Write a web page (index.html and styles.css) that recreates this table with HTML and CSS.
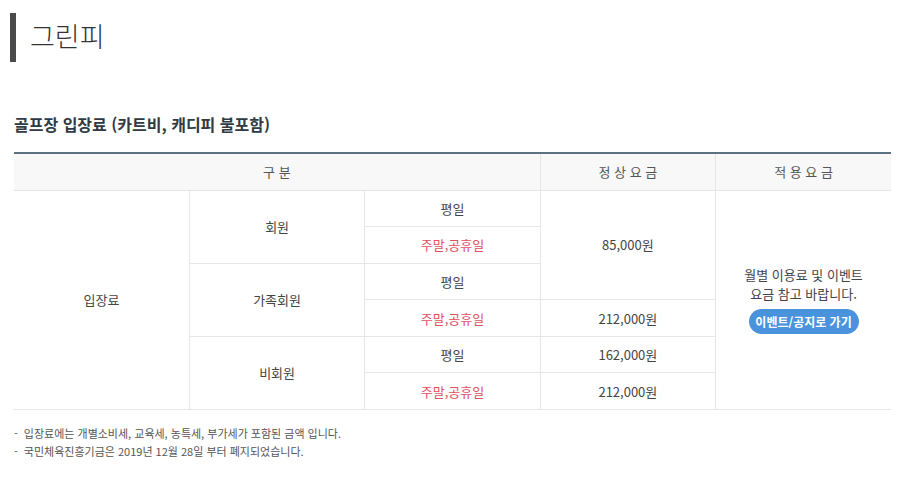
FILE: index.html
```html
<!DOCTYPE html>
<html lang="ko">
<head>
<meta charset="utf-8">
<link rel="stylesheet" href="styles.css">
</head>
<body>
<div class="page">
  <h1 class="page-title">그린피</h1>
  <h2 class="sub-title">골프장 입장료 (카트비, 캐디피 불포함)</h2>
  <table class="fee-table">
    <thead>
      <tr>
        <th colspan="3">구 분</th>
        <th>정 상 요 금</th>
        <th>적 용 요 금</th>
      </tr>
    </thead>
    <tbody>
      <tr>
        <td rowspan="6">입장료</td>
        <td rowspan="2">회원</td>
        <td>평일</td>
        <td rowspan="3">85,000원</td>
        <td rowspan="6" class="apply">
          <p class="apply-text">월별 이용료 및 이벤트<br>요금 참고 바랍니다.</p>
          <a class="btn" href="#">이벤트/공지로 가기</a>
        </td>
      </tr>
      <tr><td class="red">주말,공휴일</td></tr>
      <tr>
        <td rowspan="2">가족회원</td>
        <td>평일</td>
      </tr>
      <tr><td class="red">주말,공휴일</td><td>212,000원</td></tr>
      <tr>
        <td rowspan="2">비회원</td>
        <td>평일</td>
        <td>162,000원</td>
      </tr>
      <tr><td class="red">주말,공휴일</td><td>212,000원</td></tr>
    </tbody>
  </table>
  <ul class="notes">
    <li>입장료에는 개별소비세, 교육세, 농특세, 부가세가 포함된 금액 입니다.</li>
    <li>국민체육진흥기금은 2019년 12월 28일 부터 폐지되었습니다.</li>
  </ul>
</div>
</body>
</html>
```
FILE: styles.css
```css
* { box-sizing: border-box; }
html, body { margin: 0; padding: 0; background: #fff; }
body {
  font-family: "Noto Sans CJK KR", "Noto Sans", sans-serif;
  color: #444;
}
.page { padding: 13px 20px 0 14px; }
.page-title {
  margin: 0 0 0 -4px;
  height: 49px;
  border-left: 6px solid #4a4a4a;
  padding-left: 14px;
  font-size: 27px;
  font-weight: 300;
  line-height: 46px;
  color: #333;
}
.sub-title {
  margin: 50px 0 0 0;
  font-size: 16px;
  font-weight: 700;
  line-height: 24px;
  color: #2f3a42;
}
.fee-table {
  margin-top: 16px;
  width: 877px;
  border-collapse: collapse;
  table-layout: fixed;
  border-top: 2px solid #5a7281;
  font-size: 13px;
}
.fee-table th {
  height: 37px;
  background: #f8f8f8;
  font-weight: 400;
  color: #555;
  border-bottom: 1px solid #e4e4e4;
  border-left: 1px solid #e6e6e6;
  padding: 0;
}
.fee-table th:first-child { border-left: none; }
.fee-table td {
  height: 36.6px;
  padding: 0;
  text-align: center;
  vertical-align: middle;
  border: 1px solid #e6e6e6;
  color: #444;
}
.fee-table tbody tr td:first-child[rowspan="6"] { border-left: none; }
.fee-table td.apply { border-right: none; }
.fee-table td.red { color: #e0505e; }
.apply-text {
  margin: 0;
  font-size: 13px;
  line-height: 19px;
  color: #444;
}
.btn {
  display: inline-block;
  margin-top: 6px;
  width: 110px;
  height: 25px;
  line-height: 25px;
  border-radius: 13px;
  background: #4a93dc;
  color: #fff;
  font-size: 12px;
  font-weight: 700;
  text-decoration: none;
}
.notes {
  list-style: none;
  margin: 14px 0 0 0;
  padding: 0;
  font-size: 11px;
  line-height: 18px;
  color: #555;
}
.notes li::before { content: "-"; margin-right: 6px; }
```
